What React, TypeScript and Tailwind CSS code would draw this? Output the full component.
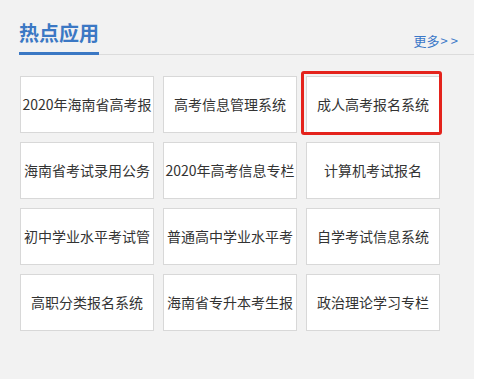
const apps = [
  "2020年海南省高考报名",
  "高考信息管理系统",
  "成人高考报名系统",
  "海南省考试录用公务员",
  "2020年高考信息专栏",
  "计算机考试报名",
  "初中学业水平考试管理",
  "普通高中学业水平考试",
  "自学考试信息系统",
  "高职分类报名系统",
  "海南省专升本考生报名",
  "政治理论学习专栏",
];

export default function App() {
  return (
    <div
      className="w-[478px] h-[379px] bg-white overflow-hidden"
      style={{ fontFamily: '"Microsoft YaHei", "Noto Sans CJK SC", sans-serif' }}
    >
      <div className="w-[474px] h-full bg-[#f2f2f2] pl-[19px] pt-[19px]">
        {/* header */}
        <div className="flex items-end justify-between border-b border-[#dcdcdc] pr-[13px]">
          <h2 className="text-[20px] leading-[28px] font-bold text-[#3b78c4] border-b-[3px] border-[#3b78c4] pb-[5px] -mb-px w-[80px]">
            热点应用
          </h2>
          <a className="text-[13px] leading-[16px] text-[#3b78c8] mb-[5px]">
            更多<span className="tracking-[3px] pl-[1px]">&gt;&gt;</span>
          </a>
        </div>

        {/* grid */}
        <div className="grid grid-cols-[134px_134px_134px] auto-rows-[57px] gap-[9px] mt-[21px] pl-px">
          {apps.map((name, i) => (
            <div
              key={i}
              className="relative flex items-center justify-center bg-white border border-[#d8d8d8] text-[14px] text-[#333] overflow-visible"
            >
              <span className="block w-full overflow-hidden whitespace-nowrap text-center px-px">
                {name.length > 9 ? name.slice(0, name.startsWith("2020") ? 11 : 9) : name}
              </span>
              {i === 2 && (
                <span className="absolute -left-[6px] -top-[6px] -right-[3px] -bottom-[3px] border-[3px] border-[#e4231c] rounded-[3px] pointer-events-none" />
              )}
            </div>
          ))}
        </div>
      </div>
    </div>
  );
}
